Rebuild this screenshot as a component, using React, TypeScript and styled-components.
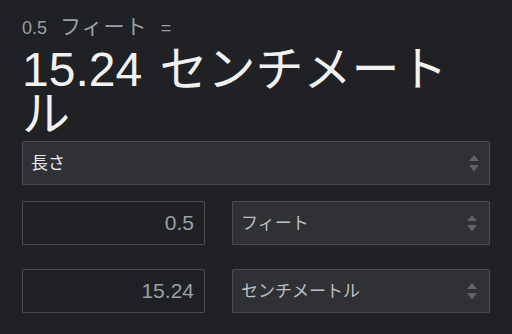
import React from "react";
import styled, { createGlobalStyle } from "styled-components";

const FONT = `"Liberation Sans", Arial, "Noto Sans CJK JP", sans-serif`;

const Global = createGlobalStyle`
  html, body {
    margin: 0;
    padding: 0;
    background: #202124;
  }
  body {
    font-family: ${FONT};
  }
`;

const Page = styled.div`
  width: 512px;
  height: 334px;
  box-sizing: border-box;
  padding: 16px 22px 0 22px;
  background: #202124;
  display: flex;
  flex-direction: column;
`;

const Equation = styled.div`
  font-size: 18px;
  line-height: 22px;
  color: #9aa0a6;
  white-space: nowrap;
  word-spacing: 8px;
`;

const EqUnit = styled.span`
  font-size: 21px;
  line-height: 22px;
  letter-spacing: 1px;
  word-spacing: 0;
`;

const Result = styled.div`
  font-size: 48px;
  line-height: 45px;
  color: #f1f1f1;
  margin-top: 8px;
  width: 450px;
  word-spacing: 4px;
`;

const Controls = styled.div`
  display: grid;
  grid-template-columns: 183px 258px;
  column-gap: 27px;
  row-gap: 24px;
  margin-top: 4px;
`;

const Wide = styled.div`
  grid-column: 1 / span 2;
  margin-bottom: -8px;
`;

const SelectBox = styled.div<{ $pr?: number }>`
  display: flex;
  align-items: center;
  box-sizing: border-box;
  height: 44px;
  background: #303134;
  border: 1px solid #484b4f;
  border-radius: 1px;
  padding: 0 ${(p) => p.$pr ?? 10}px 0 8px;
`;

const NativeSelect = styled.select<{ $tone: string }>`
  appearance: none;
  -webkit-appearance: none;
  flex: 1;
  min-width: 0;
  background: transparent;
  border: none;
  outline: none;
  padding: 0;
  margin: 0;
  font-family: ${FONT};
  font-size: 17px;
  color: ${(p) => p.$tone};
`;

const NumberInput = styled.input`
  box-sizing: border-box;
  height: 44px;
  width: 100%;
  background: #202124;
  border: 1px solid #484b4f;
  border-radius: 1px;
  padding: 0 10px;
  margin: 0;
  text-align: right;
  font-family: ${FONT};
  font-size: 21px;
  color: #9aa0a6;
  outline: none;
`;

const Arrows = () => (
  <svg width="10" height="17" viewBox="0 0 10 17" aria-hidden="true">
    <path d="M5 0 L10 6 L0 6 Z" fill="#5f6368" />
    <path d="M0 10 L10 10 L5 16.5 Z" fill="#5f6368" />
  </svg>
);

export default function App() {
  return (
    <>
      <Global />
      <Page>
        <Equation>
          0.5 <EqUnit>フィート</EqUnit> =
        </Equation>
        <Result>15.24 センチメートル</Result>
        <Controls>
          <Wide>
            <SelectBox>
              <NativeSelect $tone="#e8eaed" defaultValue="len">
                <option value="len">長さ</option>
              </NativeSelect>
              <Arrows />
            </SelectBox>
          </Wide>
          <NumberInput readOnly value="0.5" />
          <SelectBox $pr={12}>
            <NativeSelect $tone="#bdc1c6" defaultValue="ft">
              <option value="ft">フィート</option>
            </NativeSelect>
            <Arrows />
          </SelectBox>
          <NumberInput readOnly value="15.24" />
          <SelectBox $pr={12}>
            <NativeSelect $tone="#bdc1c6" defaultValue="cm">
              <option value="cm">センチメートル</option>
            </NativeSelect>
            <Arrows />
          </SelectBox>
        </Controls>
      </Page>
    </>
  );
}
